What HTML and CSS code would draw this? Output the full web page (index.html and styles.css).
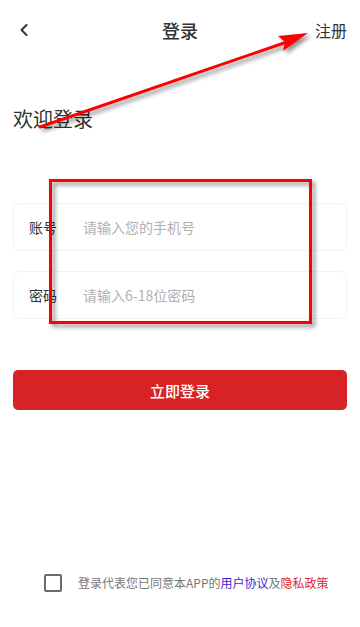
FILE: index.html
```html
<!DOCTYPE html>
<html lang="zh-CN">
<head>
<meta charset="utf-8">
<title>登录</title>
<link rel="stylesheet" href="styles.css">
</head>
<body>
<div class="page">
  <header class="topbar">
    <span class="back">
      <svg width="10" height="12" viewBox="0 0 10 12"><path d="M7.5 1 L2.5 6 L7.5 11" fill="none" stroke="#333" stroke-width="2" stroke-linecap="round" stroke-linejoin="round"/></svg>
    </span>
    <h1 class="title">登录</h1>
    <span class="register">注册</span>
  </header>

  <h2 class="welcome">欢迎登录</h2>

  <div class="form">
    <div class="field">
      <span class="label">账号</span>
      <span class="placeholder">请输入您的手机号</span>
    </div>
    <div class="field">
      <span class="label">密码</span>
      <span class="placeholder">请输入6-18位密码</span>
    </div>
  </div>

  <button class="submit">立即登录</button>

  <div class="agree">
    <span class="checkbox"></span>
    <span class="agree-text">登录代表您已同意本APP的<span class="link-blue">用户协议</span>及<span class="link-red">隐私政策</span></span>
  </div>

  <svg class="annot" width="360" height="627" viewBox="0 0 360 627">
    <defs>
      <filter id="sh" x="-10%" y="-10%" width="130%" height="130%">
        <feDropShadow dx="3" dy="3" stdDeviation="2" flood-color="#000" flood-opacity="0.45"/>
      </filter>
    </defs>
    <g filter="url(#sh)">
      <rect x="50.5" y="180.5" width="260" height="142" fill="none" stroke="#ff0000" stroke-width="3"/>
      <path d="M40 127 L284 43" stroke="#ff0000" stroke-width="3" stroke-linecap="round" fill="none"/>
      <path d="M308 33 L278 36 L285 42 L283 51 Z" fill="#ff0000"/>
    </g>
  </svg>
</div>
</body>
</html>
```
FILE: styles.css
```css
* { box-sizing: border-box; }
html, body { margin: 0; padding: 0; background: #fff; }
body {
  font-family: "Noto Sans CJK SC", "Noto Sans", sans-serif;
  color: #333;
}
.page {
  position: relative;
  width: 360px;
  height: 627px;
  overflow: hidden;
}
.topbar {
  height: 60px;
  display: flex;
  align-items: center;
  justify-content: space-between;
  padding: 0 13px 0 19px;
  position: relative;
}
.back { display: flex; align-items: center; width: 10px; height: 12px; }
.title {
  margin: 0;
  font-size: 18px;
  font-weight: 500;
  line-height: 24px;
  color: #333;
  position: absolute;
  left: 0; right: 0;
  text-align: center;
  pointer-events: none;
}
.register { font-size: 16px; line-height: 22px; color: #333; }
.welcome {
  margin: 45px 0 0 13px;
  font-size: 20px;
  font-weight: 400;
  line-height: 28px;
  color: #333;
}
.form {
  margin: 70px 13px 0;
  display: flex;
  flex-direction: column;
  gap: 20px;
}
.field {
  height: 48px;
  border: 1px solid #f3f3f3;
  border-radius: 6px;
  display: flex;
  align-items: center;
  padding-left: 15px;
}
.label { width: 54px; font-size: 14px; color: #333; }
.placeholder { font-size: 14px; color: #b0b0b0; }
.submit {
  display: block;
  margin: 51px 13px 0;
  width: 334px;
  height: 40px;
  border: 0;
  border-radius: 5px;
  background: #d82326;
  color: #fff;
  font-family: inherit;
  font-size: 15px;
  font-weight: 500;
}
.agree {
  margin: 164px 0 0 44px;
  display: flex;
  align-items: center;
  gap: 16px;
}
.checkbox {
  width: 18px; height: 18px;
  border: 2px solid #6b6b6b;
  border-radius: 2px;
  flex: none;
}
.agree-text { font-size: 12px; color: #777; line-height: 18px; }
.link-blue { color: #3d1fd6; }
.link-red { color: #e0282b; }
.annot { position: absolute; left: 0; top: 0; pointer-events: none; }
```
